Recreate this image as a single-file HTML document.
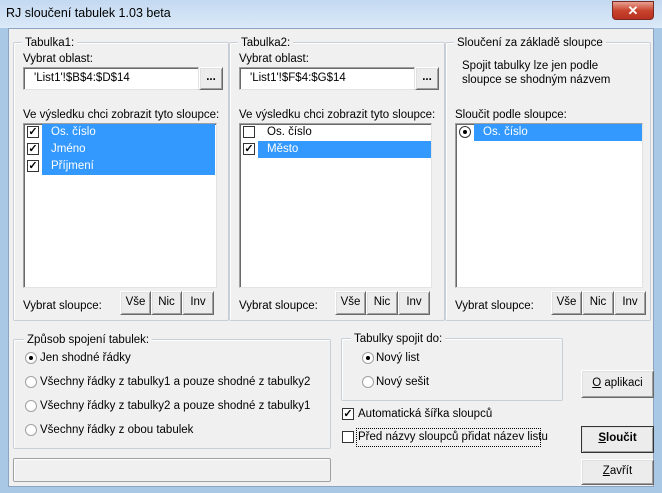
<!DOCTYPE html>
<html><head><meta charset="utf-8"><style>
*{box-sizing:border-box;margin:0;padding:0}
body{width:662px;height:493px;overflow:hidden;font-family:"Liberation Sans",sans-serif;font-size:11.5px;color:#000;background:#a9c8e6;position:relative}
.a{position:absolute;white-space:nowrap;line-height:17px}
.title{left:0;top:0;width:662px;height:28px;background:linear-gradient(#c3d9f1,#dbe9f8)}
.client{left:8px;top:28px;width:646px;height:459px;background:#f0f0f0;border:1px solid #8aa4c2}
.gb{position:absolute;border:1px solid #c8cfd6;box-shadow:inset 1px 1px 0 #fff;border-radius:2px}
.gb span{position:absolute;top:-7px;left:8px;background:#f0f0f0;padding:0 3px;line-height:14px}
.tb{position:absolute;background:#fff;border:1px solid #a0a0a0;border-right-color:#e3e3e3;border-bottom-color:#e3e3e3;box-shadow:inset 1px 1px 0 #696969}
.btn{position:absolute;background:#ececec;border:1px solid #fff;border-right-color:#696969;border-bottom-color:#696969;box-shadow:1px 1px 0 #e0e0e0 inset,-1px -1px 0 #a0a0a0 inset;text-align:center}
.cb{position:absolute;width:12px;height:12px;border:1px solid #333;background:#fff;font-size:11px;line-height:10px;text-align:center;font-weight:bold}
.sel{position:absolute;background:#3399ff;color:#fff}
.rd{position:absolute;width:12px;height:12px;border-radius:50%;border:1px solid #a0a0a0;background:#fff}
.rd.on::after{content:"";position:absolute;left:3px;top:3px;width:4px;height:4px;border-radius:50%;background:#000}
</style></head><body>
<div class="a title"></div>
<div class="a" style="left:6px;top:5px;font-size:12.5px">RJ sloučení tabulek 1.03 beta</div>
<div class="a" style="left:612px;top:1px;width:42px;height:19px;border-radius:0 0 4px 4px;background:linear-gradient(#e8a090,#c8442f 50%,#b83020);border:1px solid #7a2a20;color:#fff;font-weight:bold;text-align:center;font-size:13px;line-height:17px">✕</div>
<div class="a client"></div>

<!-- Group 1 -->
<div class="gb" style="left:13px;top:42px;width:216px;height:279px"><span>Tabulka1:</span></div>
<div class="a" style="left:23px;top:51px">Vybrat oblast:</div>
<div class="tb" style="left:23px;top:67px;width:176px;height:23px"></div>
<div class="a" style="left:34px;top:70px">'List1'!$B$4:$D$14</div>
<div class="btn" style="left:199px;top:67px;width:24px;height:23px;font-weight:bold;line-height:18px">...</div>
<div class="a" style="left:23px;top:107px">Ve výsledku chci zobrazit tyto sloupce:</div>
<div class="tb" style="left:23px;top:123px;width:194px;height:165px"></div>
<div class="sel" style="left:42px;top:124px;width:173px;height:51px"></div>
<div class="cb" style="left:27px;top:126px">✓</div><div class="a" style="left:51px;top:124px;color:#fff">Os. číslo</div>
<div class="cb" style="left:27px;top:143px">✓</div><div class="a" style="left:51px;top:141px;color:#fff">Jméno</div>
<div class="cb" style="left:27px;top:160px">✓</div><div class="a" style="left:51px;top:158px;color:#fff">Příjmení</div>
<div class="a" style="left:23px;top:298px">Vybrat sloupce:</div>
<div class="btn" style="left:120px;top:291px;width:31px;height:24px;line-height:20px">Vše</div>
<div class="btn" style="left:151px;top:291px;width:31px;height:24px;line-height:20px">Nic</div>
<div class="btn" style="left:182px;top:291px;width:32px;height:24px;line-height:20px">Inv</div>

<!-- Group 2 -->
<div class="gb" style="left:229px;top:42px;width:216px;height:279px"><span>Tabulka2:</span></div>
<div class="a" style="left:239px;top:51px">Vybrat oblast:</div>
<div class="tb" style="left:239px;top:67px;width:176px;height:23px"></div>
<div class="a" style="left:250px;top:70px">'List1'!$F$4:$G$14</div>
<div class="btn" style="left:415px;top:67px;width:24px;height:23px;font-weight:bold;line-height:18px">...</div>
<div class="a" style="left:239px;top:107px">Ve výsledku chci zobrazit tyto sloupce:</div>
<div class="tb" style="left:239px;top:123px;width:193px;height:165px"></div>
<div class="sel" style="left:258px;top:141px;width:173px;height:17px"></div>
<div class="cb" style="left:243px;top:126px"></div><div class="a" style="left:267px;top:124px">Os. číslo</div>
<div class="cb" style="left:243px;top:143px">✓</div><div class="a" style="left:267px;top:141px;color:#fff">Město</div>
<div class="a" style="left:239px;top:298px">Vybrat sloupce:</div>
<div class="btn" style="left:335px;top:291px;width:31px;height:24px;line-height:20px">Vše</div>
<div class="btn" style="left:366px;top:291px;width:32px;height:24px;line-height:20px">Nic</div>
<div class="btn" style="left:398px;top:291px;width:32px;height:24px;line-height:20px">Inv</div>

<!-- Group 3 -->
<div class="gb" style="left:445px;top:42px;width:206px;height:279px"><span>Sloučení za základě sloupce</span></div>
<div class="a" style="left:462px;top:58px">Spojit tabulky lze jen podle</div>
<div class="a" style="left:462px;top:72px">sloupce se shodným názvem</div>
<div class="a" style="left:455px;top:107px">Sloučit podle sloupce:</div>
<div class="tb" style="left:455px;top:123px;width:188px;height:165px"></div>
<div class="sel" style="left:474px;top:124px;width:168px;height:17px"></div>
<div class="rd on" style="left:459px;top:126px;border-color:#333"></div><div class="a" style="left:483px;top:124px;color:#fff">Os. číslo</div>
<div class="a" style="left:455px;top:298px">Vybrat sloupce:</div>
<div class="btn" style="left:551px;top:291px;width:31px;height:24px;line-height:20px">Vše</div>
<div class="btn" style="left:582px;top:291px;width:32px;height:24px;line-height:20px">Nic</div>
<div class="btn" style="left:614px;top:291px;width:32px;height:24px;line-height:20px">Inv</div>

<!-- Způsob -->
<div class="gb" style="left:13px;top:339px;width:318px;height:110px"><span style="left:10px">Způsob spojení tabulek:</span></div>
<div class="rd on" style="left:25px;top:352px"></div><div class="a" style="left:40px;top:350px">Jen shodné řádky</div>
<div class="rd" style="left:25px;top:376px"></div><div class="a" style="left:40px;top:374px">Všechny řádky z tabulky1 a pouze shodné z tabulky2</div>
<div class="rd" style="left:25px;top:400px"></div><div class="a" style="left:40px;top:398px">Všechny řádky z tabulky2 a pouze shodné z tabulky1</div>
<div class="rd" style="left:25px;top:424px"></div><div class="a" style="left:40px;top:422px">Všechny řádky z obou tabulek</div>
<div class="gb" style="left:13px;top:458px;width:318px;height:24px;border-color:#a0a0a0"></div>

<!-- Tabulky spojit do -->
<div class="gb" style="left:341px;top:338px;width:222px;height:63px"><span style="left:9px">Tabulky spojit do:</span></div>
<div class="rd on" style="left:362px;top:352px"></div><div class="a" style="left:376px;top:350px">Nový list</div>
<div class="rd" style="left:362px;top:376px"></div><div class="a" style="left:376px;top:374px">Nový sešit</div>
<div class="cb" style="left:342px;top:408px">✓</div><div class="a" style="left:358px;top:406px">Automatická šířka sloupců</div>
<div class="cb" style="left:342px;top:431px"></div>
<div class="a" style="left:356px;top:428px;width:185px;height:19px;border:1px dotted #000"></div>
<div class="a" style="left:358px;top:429px">Před názvy sloupců přidat název listu</div>

<div class="btn" style="left:581px;top:370px;width:73px;height:28px;line-height:24px"><u>O</u> aplikaci</div>
<div class="btn" style="left:581px;top:426px;width:73px;height:27px;line-height:23px;font-weight:bold;border:1px solid #333"><u>S</u>loučit</div>
<div class="btn" style="left:581px;top:459px;width:73px;height:26px;line-height:22px"><u>Z</u>avřít</div>
</body></html>
